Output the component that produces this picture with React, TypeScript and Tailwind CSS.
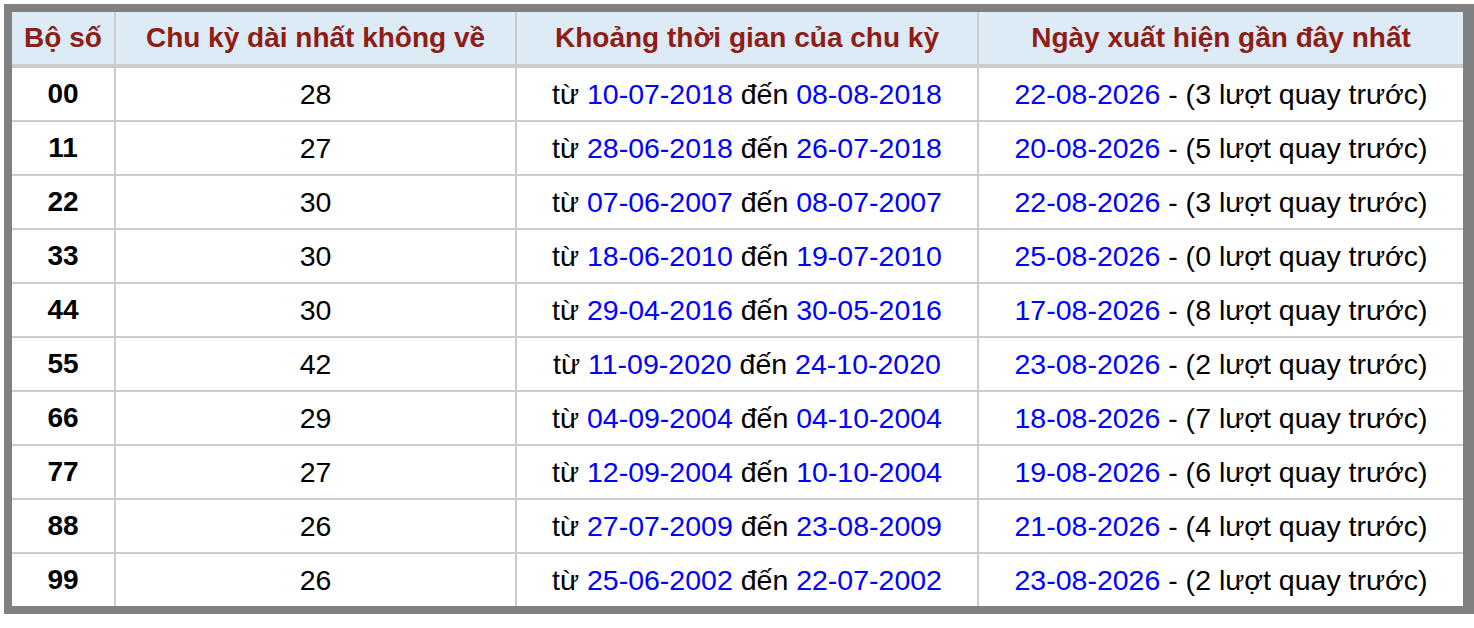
import React from 'react'

interface Row {
  pair: string
  longest: number
  from: string
  to: string
  lastSeen: string
  drawsAgo: number
}

const rows: Row[] = [
  { pair: '00', longest: 28, from: '10-07-2018', to: '08-08-2018', lastSeen: '22-08-2026', drawsAgo: 3 },
  { pair: '11', longest: 27, from: '28-06-2018', to: '26-07-2018', lastSeen: '20-08-2026', drawsAgo: 5 },
  { pair: '22', longest: 30, from: '07-06-2007', to: '08-07-2007', lastSeen: '22-08-2026', drawsAgo: 3 },
  { pair: '33', longest: 30, from: '18-06-2010', to: '19-07-2010', lastSeen: '25-08-2026', drawsAgo: 0 },
  { pair: '44', longest: 30, from: '29-04-2016', to: '30-05-2016', lastSeen: '17-08-2026', drawsAgo: 8 },
  { pair: '55', longest: 42, from: '11-09-2020', to: '24-10-2020', lastSeen: '23-08-2026', drawsAgo: 2 },
  { pair: '66', longest: 29, from: '04-09-2004', to: '04-10-2004', lastSeen: '18-08-2026', drawsAgo: 7 },
  { pair: '77', longest: 27, from: '12-09-2004', to: '10-10-2004', lastSeen: '19-08-2026', drawsAgo: 6 },
  { pair: '88', longest: 26, from: '27-07-2009', to: '23-08-2009', lastSeen: '21-08-2026', drawsAgo: 4 },
  { pair: '99', longest: 26, from: '25-06-2002', to: '22-07-2002', lastSeen: '23-08-2026', drawsAgo: 2 },
]

const headers = ['Bộ số', 'Chu kỳ dài nhất không về', 'Khoảng thời gian của chu kỳ', 'Ngày xuất hiện gần đây nhất']

export default function App() {
  return (
    <div className="p-[4px] font-['Liberation_Sans',Arial,sans-serif]">
      <div className="w-max border-[8px] border-r-[11px] border-[#808080]">
        <div className="grid grid-cols-[102px_399px_460px_484px] gap-[2px] bg-[#cccccc]">
          {headers.map((h) => (
            <div
              key={h}
              className="flex h-[54px] items-center justify-center border-b-2 border-[#cccccc] bg-[#dcebf5] pb-[1px] text-[28px] font-bold text-[#8f1c15]"
            >
              {h}
            </div>
          ))}
          {rows.map((r) => (
            <React.Fragment key={r.pair}>
              <div className="flex h-[52px] items-center justify-center bg-white text-[28px] font-bold text-black">
                {r.pair}
              </div>
              <div className="flex h-[52px] items-center justify-center bg-white text-[28.5px] text-black">
                {r.longest}
              </div>
              <div className="flex h-[52px] items-center justify-center whitespace-pre bg-white text-[28.5px] text-black">
                từ <span className="text-[#0000ff]">{r.from}</span> đến <span className="text-[#0000ff]">{r.to}</span>
              </div>
              <div className="flex h-[52px] items-center justify-center whitespace-pre bg-white text-[28.5px] text-black">
                <span className="text-[#0000ff]">{r.lastSeen}</span> - ({r.drawsAgo} lượt quay trước)
              </div>
            </React.Fragment>
          ))}
        </div>
      </div>
    </div>
  )
}
